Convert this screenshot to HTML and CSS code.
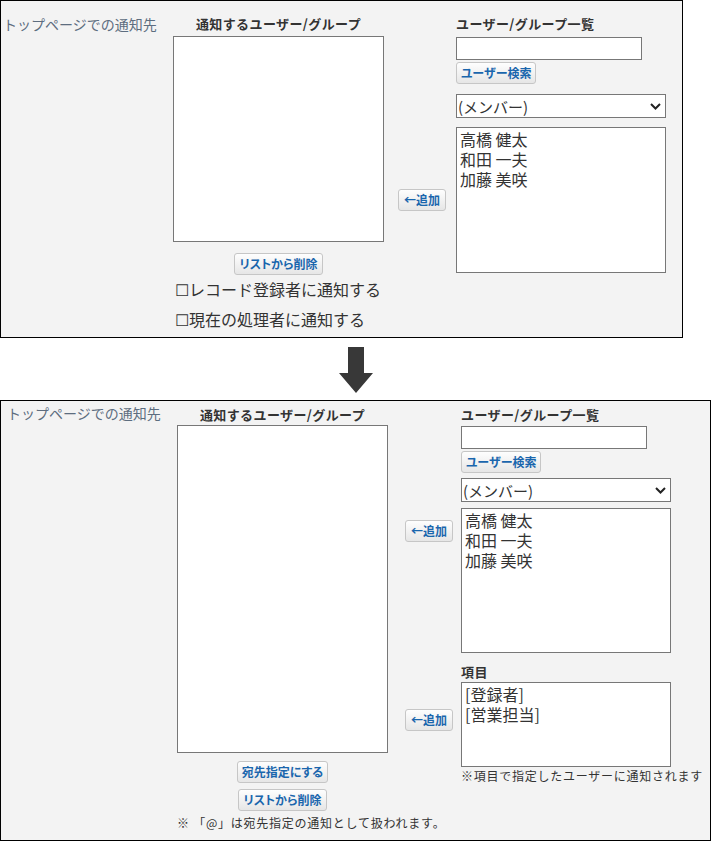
FILE: index.html
```html
<!DOCTYPE html>
<html lang="ja">
<head>
  <meta charset="UTF-8">
  <title>通知先の設定</title>
  <link rel="stylesheet" href="styles.css">
</head>
<body>
  <!-- 変更前 -->
  <div class="panel panel-a">
    <div class="label-col">トップページでの通知先</div>
    <div class="target-col">
      <div class="col-title">通知するユーザー/グループ</div>
      <ul class="listbox target-list"></ul>
      <button type="button" class="btn">リストから削除</button>
      <div class="check-line">☐レコード登録者に通知する</div>
      <div class="check-line check-line-2">☐現在の処理者に通知する</div>
    </div>
    <div class="picker">
      <div class="col-title">ユーザー/グループ一覧</div>
      <input type="text" class="search-input">
      <button type="button" class="btn search-btn">ユーザー検索</button>
      <div class="select">
        <span>(メンバー)</span>
        <svg width="11" height="7" viewBox="0 0 11 7"><polyline points="1,1 5.5,5.5 10,1" fill="none" stroke="#222" stroke-width="2"/></svg>
      </div>
      <button type="button" class="btn add-btn">←追加</button>
      <ul class="listbox member-list">
        <li>高橋 健太</li>
        <li>和田 一夫</li>
        <li>加藤 美咲</li>
      </ul>
    </div>
  </div>

  <div class="arrow-row">
    <svg width="34" height="46" viewBox="0 0 34 46"><polygon points="9,0 25,0 25,26 34,26 17,46 0,26 9,26" fill="#383838"/></svg>
  </div>

  <!-- 変更後 -->
  <div class="panel panel-b">
    <div class="label-col">トップページでの通知先</div>
    <div class="target-col">
      <div class="col-title">通知するユーザー/グループ</div>
      <ul class="listbox target-list"></ul>
      <button type="button" class="btn">宛先指定にする</button>
      <button type="button" class="btn btn-remove">リストから削除</button>
      <div class="note target-note">※ 「@」は宛先指定の通知として扱われます。</div>
    </div>
    <div class="picker">
      <div class="col-title">ユーザー/グループ一覧</div>
      <input type="text" class="search-input">
      <button type="button" class="btn search-btn">ユーザー検索</button>
      <div class="select">
        <span>(メンバー)</span>
        <svg width="11" height="7" viewBox="0 0 11 7"><polyline points="1,1 5.5,5.5 10,1" fill="none" stroke="#222" stroke-width="2"/></svg>
      </div>
      <button type="button" class="btn add-btn">←追加</button>
      <ul class="listbox member-list">
        <li>高橋 健太</li>
        <li>和田 一夫</li>
        <li>加藤 美咲</li>
      </ul>
      <div class="col-title field-title">項目</div>
      <button type="button" class="btn add-btn add-btn-2">←追加</button>
      <ul class="listbox field-list">
        <li>[登録者]</li>
        <li>[営業担当]</li>
      </ul>
      <div class="note">※項目で指定したユーザーに通知されます</div>
    </div>
  </div>
</body>
</html>
```

FILE: styles.css
```css
* {
  box-sizing: border-box;
}
body {
  margin: 0;
  font-family: "Noto Sans CJK JP", sans-serif;
  color: #333;
  background: #fff;
}
.panel {
  display: flex;
  align-items: flex-start;
  background: #f3f3f3;
  border: 1px solid #000;
}
.panel-a {
  width: 683px;
  padding: 14px 0 6px 2px;
}
.panel-b {
  width: 711px;
  height: 441px;
  padding: 5px 0 0 6px;
}
.label-col {
  width: 170px;
  font-size: 14px;
  line-height: 18px;
  color: #5d6d7f;
  white-space: nowrap;
}
.panel-b .label-col {
  margin-top: -2px;
}
.target-col {
  width: 211px;
  display: flex;
  flex-direction: column;
}
.col-title {
  font-size: 13px;
  font-weight: bold;
  line-height: 18px;
  letter-spacing: 0.4px;
  white-space: nowrap;
}
.target-col .col-title {
  text-align: center;
}
.listbox {
  list-style: none;
  margin: 0;
  padding: 1px 3px;
  background: #fff;
  border: 1px solid #777;
  font-size: 16px;
  line-height: 20px;
  white-space: nowrap;
}
.target-list {
  margin-top: 3px;
  height: 206px;
}
.panel-b .target-list {
  margin-top: 1px;
  height: 328px;
}
.btn {
  height: 22px;
  padding: 0 4px;
  font-family: inherit;
  font-size: 12px;
  font-weight: bold;
  line-height: 20px;
  font-feature-settings: "palt";
  color: #1a66ad;
  background: linear-gradient(#fefefe, #e6e6e6);
  border: 1px solid #c6c6c6;
  border-radius: 3px;
  white-space: nowrap;
}
.target-col .btn {
  align-self: center;
  margin-top: 11px;
}
.panel-b .target-col .btn {
  margin-top: 8px;
}
.panel-b .target-col .btn-remove {
  margin-top: 6px;
}
.check-line {
  font-size: 16px;
  line-height: 24px;
  margin-top: 2px;
  padding-left: 2px;
  white-space: nowrap;
}
.check-line-2 {
  margin-top: 6px;
}
.note {
  font-size: 12px;
  line-height: 18px;
  letter-spacing: 0.75px;
  white-space: nowrap;
}
.target-note {
  margin-top: 3px;
}

/* ユーザー/グループ一覧 */
.picker {
  display: grid;
  grid-template-columns: 48px 210px;
  column-gap: 10px;
  margin-left: 14px;
}
.panel-b .picker {
  column-gap: 8px;
  margin-left: 17px;
}
.picker > * {
  grid-column: 2;
}
.picker > .add-btn {
  grid-column: 1;
}
.search-input {
  justify-self: start;
  width: 186px;
  height: 23px;
  margin: 4px 0 0;
  border: 1px solid #777;
  background: #fff;
}
.search-btn {
  justify-self: start;
  margin-top: 2px;
}
.select {
  display: flex;
  align-items: center;
  justify-content: space-between;
  height: 24px;
  margin-top: 10px;
  padding: 0 4px 0 1px;
  font-size: 15px;
  background: #fff;
  border: 1px solid #777;
}
.member-list {
  height: 146px;
  margin-top: 9px;
}
.add-btn {
  align-self: center;
  margin-top: 9px;
}
.panel-b .search-input {
  margin-top: 2px;
}
.panel-b .select {
  margin-top: 5px;
}
.panel-b .member-list {
  height: 145px;
  margin-top: 6px;
}
.panel-b .add-btn {
  align-self: start;
  margin-top: 18px;
}
.panel-b .add-btn-2 {
  margin-top: 28px;
}
.field-title {
  margin-top: 10px;
}
.field-list {
  height: 85px;
  margin-top: 1px;
}

.arrow-row {
  display: flex;
  justify-content: center;
  height: 62px;
  padding-top: 9px;
}
```
